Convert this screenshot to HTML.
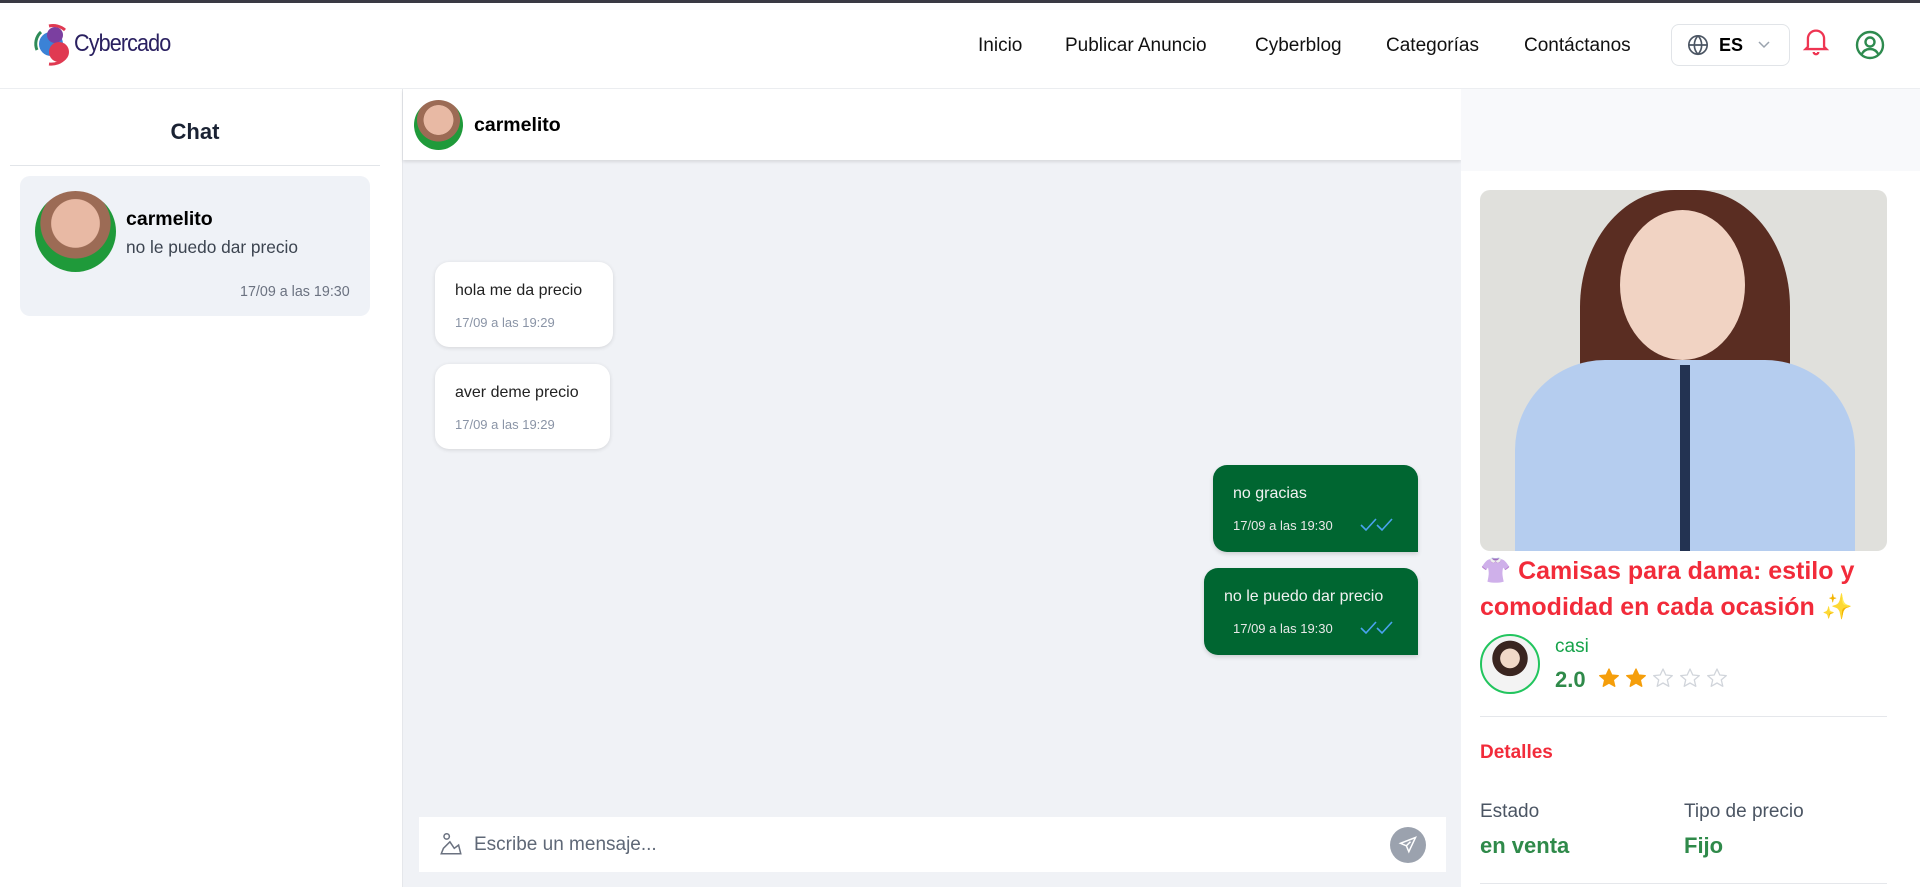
<!DOCTYPE html>
<html><head><meta charset="utf-8"><style>
*{box-sizing:border-box;margin:0;padding:0}
body{width:1920px;height:887px;overflow:hidden;font-family:"Liberation Sans",sans-serif;background:#fff;position:relative}
.abs{position:absolute}
.topline{left:0;top:0;width:1920px;height:3px;background:#3a3a44}
.header{left:0;top:3px;width:1920px;height:86px;background:#fff;border-bottom:1px solid #eceef1}
.nav{top:35px;font-size:19px;color:#111}
.left{left:0;top:89px;width:403px;height:798px;background:#fff;border-right:1px solid #e5e7eb}
.center{left:403px;top:89px;width:1058px;height:798px;background:#f0f2f6}
.chead{left:403px;top:89px;width:1058px;height:71px;background:#fff;box-shadow:0 2px 3px rgba(0,0,0,.1)}
.right{left:1461px;top:89px;width:459px;height:798px;background:#fff}
.bub{background:#fff;border-radius:14px;box-shadow:0 1px 4px rgba(0,0,0,.12);padding:0 20px}
.bub .t{font-size:16px;color:#222;position:absolute;top:20px;left:20px;white-space:nowrap}
.bub .d{font-size:13px;color:#8a94a6;position:absolute;top:53px;left:20px;white-space:nowrap}
.g{background:#006631;border-radius:14px 14px 0 14px;box-shadow:0 2px 4px rgba(0,0,0,.15)}
.g .t{color:#f1f1f1}.g .d{color:#e8e8e8}
</style></head><body>
<div class="abs topline"></div>
<div class="abs header"></div>
<svg class="abs" style="left:29px;top:20px" width="48" height="48" viewBox="0 0 48 48">
<path d="M12 12 A16 16 0 0 0 8 30" stroke="#2e8b57" stroke-width="3" fill="none"/>
<circle cx="22" cy="24" r="12" fill="#3b82d6"/>
<circle cx="26" cy="15" r="8" fill="#7b3fa0"/>
<circle cx="30" cy="32" r="10" fill="#e03a52"/>
<path d="M20 6 A18 18 0 0 1 36 10" stroke="#e03a52" stroke-width="3" fill="none"/>
<path d="M36 38 A18 18 0 0 1 20 44" stroke="#e03a52" stroke-width="3" fill="none"/>
</svg>
<div class="abs" style="left:74px;top:30px;font-size:24px;color:#2a2060;letter-spacing:-1px;transform:scaleX(.9);transform-origin:left">Cybercado</div>
<div class="abs nav" style="left:978px">Inicio</div>
<div class="abs nav" style="left:1065px">Publicar Anuncio</div>
<div class="abs nav" style="left:1255px">Cyberblog</div>
<div class="abs nav" style="left:1386px">Categorías</div>
<div class="abs nav" style="left:1524px">Contáctanos</div>
<div class="abs" style="left:1671px;top:24px;width:119px;height:42px;border:1px solid #e1e4e8;border-radius:8px"></div>
<svg class="abs" style="left:1687px;top:34px" width="22" height="22" viewBox="0 0 24 24" fill="none" stroke="#4b5563" stroke-width="1.8"><circle cx="12" cy="12" r="10"/><path d="M2 12h20M12 2c3 3 4 6.5 4 10s-1 7-4 10c-3-3-4-6.5-4-10s1-7 4-10"/></svg>
<div class="abs" style="left:1719px;top:35px;font-size:18px;font-weight:bold">ES</div>
<svg class="abs" style="left:1757px;top:39px" width="14" height="10" viewBox="0 0 14 10"><path d="M2 3l5 5 5-5" stroke="#9aa3ae" stroke-width="1.5" fill="none"/></svg>
<svg class="abs" style="left:1802px;top:26px" width="28" height="30" viewBox="0 0 24 26" fill="none" stroke="#ee3552" stroke-width="2"><path d="M5 18V11a7 7 0 0 1 14 0v7l2 2H3z"/><path d="M10 22.5a2 2 0 0 0 4 0"/></svg>
<svg class="abs" style="left:1855px;top:30px" width="30" height="30" viewBox="0 0 30 30" fill="none" stroke="#2e8b4f" stroke-width="2.4"><circle cx="15" cy="15" r="13"/><circle cx="15" cy="12" r="4.5"/><path d="M6.5 24.5c2-4 5-5.5 8.5-5.5s6.5 1.5 8.5 5.5"/></svg>

<div class="abs left"></div>
<div class="abs" style="left:0;top:119px;width:390px;text-align:center;font-size:22px;font-weight:bold;color:#1a2233">Chat</div>
<div class="abs" style="left:10px;top:165px;width:370px;height:1px;background:#e2e5e9"></div>
<div class="abs" style="left:20px;top:176px;width:350px;height:140px;background:#eff2f7;border-radius:10px"></div>
<div class="abs" style="left:35px;top:191px;width:81px;height:81px;border-radius:50%;background:radial-gradient(circle at 50% 40%,#e8b9a4 0 38%,#9c6b55 39% 55%,#1f9a3a 56%)"></div>
<div class="abs" style="left:126px;top:208px;font-size:19.5px;font-weight:bold;color:#000">carmelito</div>
<div class="abs" style="left:126px;top:237px;font-size:17.3px;color:#3c4450">no le puedo dar precio</div>
<div class="abs" style="left:240px;top:284px;font-size:14.3px;color:#6b7280">17/09 a las 19:30</div>

<div class="abs center"></div>
<div class="abs chead"></div>
<div class="abs" style="left:414px;top:100px;width:49px;height:50px;border-radius:50%;background:radial-gradient(circle at 50% 40%,#e8b9a4 0 38%,#9c6b55 39% 55%,#1f9a3a 56%)"></div>
<div class="abs" style="left:474px;top:114px;font-size:19.5px;font-weight:bold">carmelito</div>

<div class="abs bub" style="left:435px;top:262px;width:178px;height:85px"><div class="t">hola me da precio</div><div class="d">17/09 a las 19:29</div></div>
<div class="abs bub" style="left:435px;top:364px;width:175px;height:85px"><div class="t">aver deme precio</div><div class="d">17/09 a las 19:29</div></div>
<div class="abs bub g" style="left:1213px;top:465px;width:205px;height:87px"><div class="t">no gracias</div><div class="d">17/09 a las 19:30</div>
<svg class="abs" style="left:147px;top:52px" width="36" height="16" viewBox="0 0 36 16" fill="none" stroke="#4aa3f0" stroke-width="1.6"><path d="M1 8l5 5 10-11"/><path d="M17 8l5 5 10-11"/></svg></div>
<div class="abs bub g" style="left:1204px;top:568px;width:214px;height:87px"><div class="t">no le puedo dar precio</div><div class="d" style="left:29px">17/09 a las 19:30</div>
<svg class="abs" style="left:156px;top:52px" width="36" height="16" viewBox="0 0 36 16" fill="none" stroke="#4aa3f0" stroke-width="1.6"><path d="M1 8l5 5 10-11"/><path d="M17 8l5 5 10-11"/></svg></div>

<div class="abs" style="left:419px;top:817px;width:1027px;height:55px;background:#fff"></div>
<svg class="abs" style="left:438px;top:831px" width="26" height="26" viewBox="0 0 24 24" fill="none" stroke="#6b7280" stroke-width="1.4"><circle cx="8" cy="5" r="2.5"/><path d="M3 21h18l-2-8-4 3-4-6-6 6z"/></svg>
<div class="abs" style="left:474px;top:834px;font-size:19px;color:#5f6877">Escribe un mensaje...</div>
<div class="abs" style="left:1390px;top:827px;width:36px;height:36px;border-radius:50%;background:#9ba2ae"></div>
<svg class="abs" style="left:1398px;top:835px" width="20" height="20" viewBox="0 0 24 24" fill="none" stroke="#fff" stroke-width="1.8"><path d="M21 3L3 10l7 3 3 7z"/><path d="M10 13l5-5"/></svg>

<div class="abs right"></div>
<div class="abs" style="left:1461px;top:89px;width:459px;height:82px;background:#f8f9fb"></div>
<div class="abs" style="left:1480px;top:190px;width:407px;height:361px;border-radius:10px;overflow:hidden;background:#e0e0dc">
<div class="abs" style="left:100px;top:0;width:210px;height:260px;border-radius:45% 45% 30% 30%;background:#5a2d22"></div>
<div class="abs" style="left:140px;top:20px;width:125px;height:150px;border-radius:50%;background:#f1d3c3"></div>
<div class="abs" style="left:35px;top:170px;width:340px;height:200px;border-radius:90px 90px 0 0;background:#b5cdef"></div>
<div class="abs" style="left:200px;top:175px;width:10px;height:190px;background:#233352"></div>
</div>
<div class="abs" style="left:1480px;top:553px;width:420px;font-size:25px;line-height:36px;font-weight:bold;color:#f22b3a"><span style="color:#c79be6">👚</span> Camisas para dama: estilo y comodidad en cada ocasión <span style="color:#f5c542">✨</span></div>
<div class="abs" style="left:1480px;top:634px;width:60px;height:60px;border-radius:50%;border:2px solid #22c55e;background:radial-gradient(circle at 50% 40%,#f0d8c8 0 22%,#3a2520 23% 40%,#f3f3f3 41%)"></div>
<div class="abs" style="left:1555px;top:636px;font-size:19px;color:#16a34a">casi</div>
<div class="abs" style="left:1555px;top:667px;font-size:22px;font-weight:bold;color:#2f8a4a">2.0</div>
<svg class="abs" style="left:1598px;top:667px" width="135" height="24" viewBox="0 0 135 24">
<g stroke-width="1.3" stroke-linejoin="round">
<path d="M11 2l2.8 6 6.5.6-5 4.3 1.5 6.4L11 16l-5.8 3.3 1.5-6.4-5-4.3 6.5-.6z" fill="#f59e0b" stroke="#f59e0b"/>
<path transform="translate(27 0)" d="M11 2l2.8 6 6.5.6-5 4.3 1.5 6.4L11 16l-5.8 3.3 1.5-6.4-5-4.3 6.5-.6z" fill="#f59e0b" stroke="#f59e0b"/>
<path transform="translate(54 0)" d="M11 2l2.8 6 6.5.6-5 4.3 1.5 6.4L11 16l-5.8 3.3 1.5-6.4-5-4.3 6.5-.6z" fill="none" stroke="#d1d5db"/>
<path transform="translate(81 0)" d="M11 2l2.8 6 6.5.6-5 4.3 1.5 6.4L11 16l-5.8 3.3 1.5-6.4-5-4.3 6.5-.6z" fill="none" stroke="#d1d5db"/>
<path transform="translate(108 0)" d="M11 2l2.8 6 6.5.6-5 4.3 1.5 6.4L11 16l-5.8 3.3 1.5-6.4-5-4.3 6.5-.6z" fill="none" stroke="#d1d5db"/>
</g></svg>
<div class="abs" style="left:1480px;top:716px;width:407px;height:1px;background:#e5e7eb"></div>
<div class="abs" style="left:1480px;top:742px;font-size:19px;font-weight:bold;color:#f22b3a">Detalles</div>
<div class="abs" style="left:1480px;top:801px;font-size:19px;color:#4b5563">Estado</div>
<div class="abs" style="left:1684px;top:801px;font-size:19px;color:#4b5563">Tipo de precio</div>
<div class="abs" style="left:1480px;top:833px;font-size:22px;font-weight:bold;color:#2f8a4a">en venta</div>
<div class="abs" style="left:1684px;top:833px;font-size:22px;font-weight:bold;color:#2f8a4a">Fijo</div>
<div class="abs" style="left:1480px;top:883px;width:407px;height:1px;background:#e5e7eb"></div>
</body></html>
